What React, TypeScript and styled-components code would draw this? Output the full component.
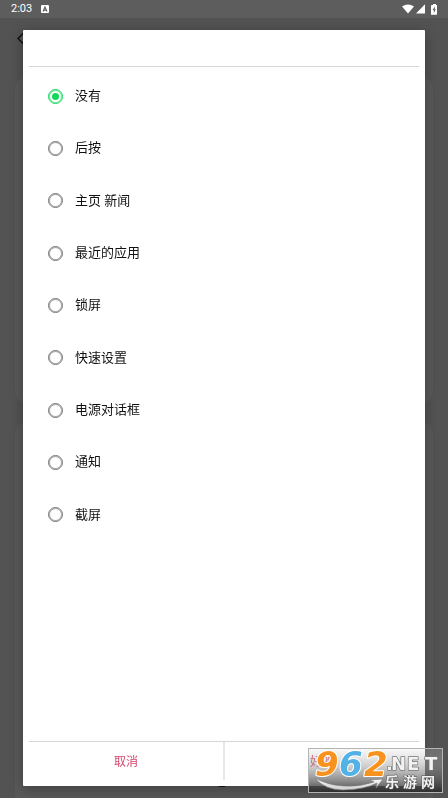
import React, { useState } from "react";
import styled, { createGlobalStyle } from "styled-components";

const GlobalStyle = createGlobalStyle`
  * { box-sizing: border-box; }
  body {
    margin: 0;
    background: #4d4d4d;
    font-family: Roboto, "Noto Sans CJK SC", sans-serif;
  }
`;

const Screen = styled.div`
  display: flex;
  flex-direction: column;
  height: 100vh;
  overflow: hidden;
  background: #535353;
`;

const StatusBar = styled.header`
  display: flex;
  align-items: center;
  flex: none;
  height: 18px;
  padding: 0 9px 0 11px;
  background: #5d5d5d;
  color: #fff;
`;

const Clock = styled.time`
  font-size: 11px;
  line-height: 18px;
  font-weight: 400;
  margin-right: 9px;
`;

const StatusIcons = styled.div`
  display: flex;
  align-items: center;
  gap: 2px;
  margin-left: auto;
`;

const Settings = styled.main`
  display: flex;
  flex: 1;
  flex-direction: column;
  gap: 19px;
  min-height: 0;
  padding: 0 15px;
`;

const BackButton = styled.button`
  display: flex;
  flex: none;
  align-self: flex-start;
  height: 40px;
  padding: 14px 0 0 2px;
  border: 0;
  background: none;
`;

const Card = styled.section<{ $grow: number }>`
  flex: ${(p) => p.$grow} 1 0;
  border-radius: 12px;
  background: #595959;

  &:last-child { border-radius: 12px 12px 0 0; }
`;

const Scrim = styled.div`
  position: fixed;
  inset: 0;
  display: flex;
  padding: 30px 23px 12px;
`;

const Dialog = styled.form`
  display: flex;
  flex: 1;
  flex-direction: column;
  padding: 36px 6px 6px;
  border-radius: 1px;
  background: #fff;
  box-shadow: 0 3px 14px rgba(0, 0, 0, 0.3);
`;

const Options = styled.div`
  flex: 1;
  padding: 3px 18px 3px 19px;
  border: solid #d6d6d6;
  border-width: 1px 0;
`;

const OptionList = styled.div`
  display: grid;
  grid-auto-rows: 1fr;
  height: 471px;
`;

const Option = styled.label`
  display: flex;
  align-items: center;
  gap: 12px;
  color: #111;
  font-size: 13px;
  line-height: 20px;
`;

const Radio = styled.input`
  appearance: none;
  display: grid;
  place-items: center;
  width: 15px;
  height: 15px;
  margin: 0;
  border: 1px solid #757575;
  border-radius: 50%;
  box-shadow: inset 0 0 0 1px #a8a8a8;

  &:checked {
    border-color: #12d75b;
    box-shadow: inset 0 0 0 1px #6be697;
  }
  &:checked::after {
    content: "";
    width: 7px;
    height: 7px;
    border-radius: 50%;
    background: #12d75b;
  }
`;

const Actions = styled.footer`
  display: flex;
  height: 38px;
`;

const Action = styled.button`
  flex: 1;
  padding: 2px 0 0;
  border: 0;
  background: none;
  color: #d6456b;
  font: inherit;
  font-size: 12px;
  line-height: 18px;

  & + & { border-left: 2px solid #e8e8e8; }
`;

const Watermark = styled.div`
  position: fixed;
  right: 5px;
  bottom: 5px;
  height: 45px;
  pointer-events: none;
`;

const HomeMark = styled.div`
  position: fixed;
  bottom: 11px;
  left: 50%;
  width: 8px;
  height: 2px;
  margin-left: -6px;
  border-radius: 0 0 4px 4px;
  background: #111;
`;

const choices = ["没有", "后按", "主页 新闻", "最近的应用", "锁屏", "快速设置", "电源对话框", "通知", "截屏"];

function InputIcon() {
  return (
    <svg width="8" height="8" viewBox="0 0 8 8" aria-hidden="true">
      <rect width="8" height="8" rx="1" fill="#fff" />
      <path d="M2 6.500 4 2 6 6.500M2.8 5.200h2.400" fill="none" stroke="#555" strokeWidth="1.1" />
    </svg>
  );
}

function SignalIcons() {
  return (
    <StatusIcons>
      <svg width="12" height="10" viewBox="0 0 12 10" aria-hidden="true">
        <path d="M0 2.6Q6-1.8 12 2.6L6 9.6Z" fill="#fff" />
      </svg>
      <svg width="9" height="10" viewBox="0 0 9 10" aria-hidden="true">
        <path d="M9 .3V9.6H0Z" fill="#fff" />
      </svg>
      <svg width="12" height="11" viewBox="0 0 12 11" aria-hidden="true">
        <path d="M5 1h1V0h3v1h1v9.2q0 .6-.6.6H4.6q-.6 0-.6-.6V1.6Q4 1 5 1Z" fill="#fff" />
        <path d="M7.800 2.6 5.600 6h1.200v3l2-3.600H7.800Z" fill="#5d5d5d" />
      </svg>
    </StatusIcons>
  );
}

function SiteLogo() {
  return (
    <svg width="135" height="45" viewBox="0 0 135 45" role="img" aria-label="962.NET 乐游网">
      <defs>
        <linearGradient id="shade" x2="0" y2="1">
          <stop offset="0" stopColor="#999" stopOpacity=".06" />
          <stop offset=".35" stopColor="#888" stopOpacity=".35" />
          <stop offset="1" stopColor="#222" stopOpacity=".85" />
        </linearGradient>
        <linearGradient id="silver" x2="0" y2="1">
          <stop offset="0" stopColor="#fff" />
          <stop offset="1" stopColor="#ccc" />
        </linearGradient>
      </defs>
      <rect x=".5" y=".5" width="134" height="44" fill="#fff" fillOpacity=".14" />
      <rect x=".5" y=".5" width="134" height="44" fill="url(#shade)" stroke="#b5b5b5" />
      <path d="M7 30Q17 42 35 42Q57 41.500 69 35L68 40 75 31 62 32 66 34Q52 39 36 38Q19 37 7 30Z" fill="url(#silver)" stroke="#777" strokeWidth=".6" />
      <g fontFamily='"DejaVu Sans", sans-serif' fontWeight="700" paintOrder="stroke" strokeLinejoin="round">
        <g fontSize="34" fontStyle="italic" stroke="#fff" strokeWidth="2">
          <text x="7" y="28" fill="#f7921e">9</text>
          <text x="31" y="28" fill="#52b1e5">6</text>
          <text x="56" y="28" fill="#f7921e">2</text>
        </g>
        <text x="78 83 99 117" y="22" fontSize="18" fill="#f2f2f2" stroke="#777" strokeWidth="1.500">.NET</text>
      </g>
      <text x="77 95 113" y="39" fontFamily='"Noto Sans CJK SC", sans-serif' fontWeight="700" fontSize="14" fill="#f2f2f2" stroke="#555" strokeWidth="1" paintOrder="stroke">乐游网</text>
    </svg>
  );
}

export default function App() {
  const [selected, setSelected] = useState(choices[0]);
  return (
    <>
      <GlobalStyle />
      <Screen>
        <StatusBar>
          <Clock>2:03</Clock>
          <InputIcon />
          <SignalIcons />
        </StatusBar>
        <Settings>
          <BackButton type="button" aria-label="返回">
            <svg width="8" height="13" viewBox="0 0 8 13" aria-hidden="true">
              <path d="M7 .5 1 6.500 7 12.500" fill="none" stroke="#111" strokeWidth="1.400" />
            </svg>
          </BackButton>
          <Card $grow={326} />
          <Card $grow={376} />
        </Settings>
      </Screen>
      <HomeMark />
      <Scrim>
        <Dialog role="dialog" aria-modal="true" onSubmit={(e) => e.preventDefault()}>
          <Options>
            <OptionList role="radiogroup">
              {choices.map((choice) => (
                <Option key={choice}>
                  <Radio type="radio" name="action" checked={selected === choice} onChange={() => setSelected(choice)} />
                  {choice}
                </Option>
              ))}
            </OptionList>
          </Options>
          <Actions>
            <Action type="button">取消</Action>
            <Action type="submit">好的</Action>
          </Actions>
        </Dialog>
      </Scrim>
      <Watermark>
        <SiteLogo />
      </Watermark>
    </>
  );
}
